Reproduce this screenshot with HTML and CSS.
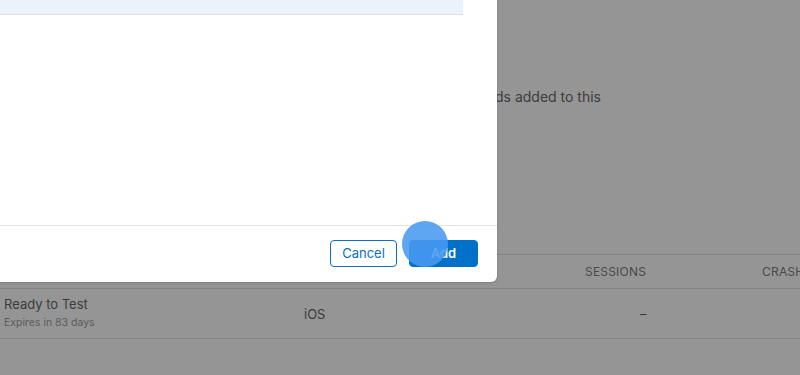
FILE: index.html
```html
<!DOCTYPE html>
<html>
<head>
<meta charset="utf-8">
<link rel="stylesheet" href="styles.css">
</head>
<body>
<div class="page">
  <p class="intro">There are no builds added to this</p>
  <div class="table">
    <div class="thead">
      <div class="c1"></div>
      <div class="c2"></div>
      <div class="c3">SESSIONS</div>
      <div class="c4">CRASHES</div>
    </div>
    <div class="trow">
      <div class="c1">
        <div class="status">Ready to Test</div>
        <div class="expires">Expires in 83 days</div>
      </div>
      <div class="c2">iOS</div>
      <div class="c3">–</div>
      <div class="c4"></div>
    </div>
  </div>
</div>

<div class="modal">
  <div class="band"></div>
  <div class="body"></div>
  <div class="footer">
    <button class="btn cancel">Cancel</button>
    <button class="btn add">Add</button>
  </div>
</div>
<div class="touch"></div>
</body>
</html>
```
FILE: styles.css
```css
* { box-sizing: border-box; }
html, body {
  margin: 0;
  padding: 0;
  width: 800px;
  height: 375px;
  overflow: hidden;
  background: #959595;
  font-family: Inter, "Noto Sans", sans-serif;
}
.page {
  width: 800px;
  height: 375px;
  padding-top: 87px;
}
.intro {
  margin: 0;
  width: 601px;
  text-align: right;
  font-size: 14px;
  line-height: 20px;
  color: #3c3c3c;
  height: 147px;
}
.table {
  margin-top: 20px;
  border-top: 1px solid #838383;
}
.thead, .trow {
  display: flex;
  align-items: center;
  border-bottom: 1px solid #838383;
}
.thead {
  height: 34px;
  font-size: 12px;
  letter-spacing: 0.2px;
  color: #4a4a4a;
}
.trow {
  height: 50px;
}
.c1 { width: 280px; padding-left: 4px; }
.c2 { width: 200px; padding-left: 24px; font-size: 13px; color: #3a3a3a; }
.c3 { width: 200px; padding-left: 105px; white-space: nowrap; }
.c4 { width: 120px; padding-left: 82px; white-space: nowrap; overflow: hidden; }
.trow .c3 { padding-left: 160px; font-size: 13px; color: #3a3a3a; }
.status { font-size: 13px; line-height: 17px; color: #3b3b3b; }
.expires { font-size: 10.5px; line-height: 16px; color: #5c5c5c; margin-top: 2px; }

.modal {
  position: absolute;
  left: 0;
  top: 0;
  width: 497px;
  height: 282px;
  background: #ffffff;
  border-bottom-right-radius: 6px;
  display: flex;
  flex-direction: column;
  box-shadow: 0 1px 3px rgba(0,0,0,0.15);
}
.band {
  width: 463px;
  height: 15px;
  background: #eaf3fc;
  border-bottom: 1px solid #e3dcdc;
}
.body {
  flex: 1;
  border-bottom: 1px solid #e4e4e4;
}
.footer {
  height: 56px;
  display: flex;
  justify-content: flex-end;
  align-items: center;
  gap: 12px;
  padding: 0 19px 2px 0;
}
.btn {
  height: 27px;
  border-radius: 4px;
  font-family: Inter, "Noto Sans", sans-serif;
  font-size: 13px;
  padding: 0;
  cursor: pointer;
}
.cancel {
  width: 67px;
  border: 1px solid #0a70c4;
  background: #ffffff;
  color: #0a70c4;
}
.add {
  width: 69px;
  border: 1px solid #0070c9;
  background: #0070c9;
  color: #ffffff;
  font-weight: 600;
}
.touch {
  position: absolute;
  left: 402px;
  top: 221px;
  width: 46px;
  height: 46px;
  border-radius: 50%;
  background: rgba(72, 152, 240, 0.88);
}
```
